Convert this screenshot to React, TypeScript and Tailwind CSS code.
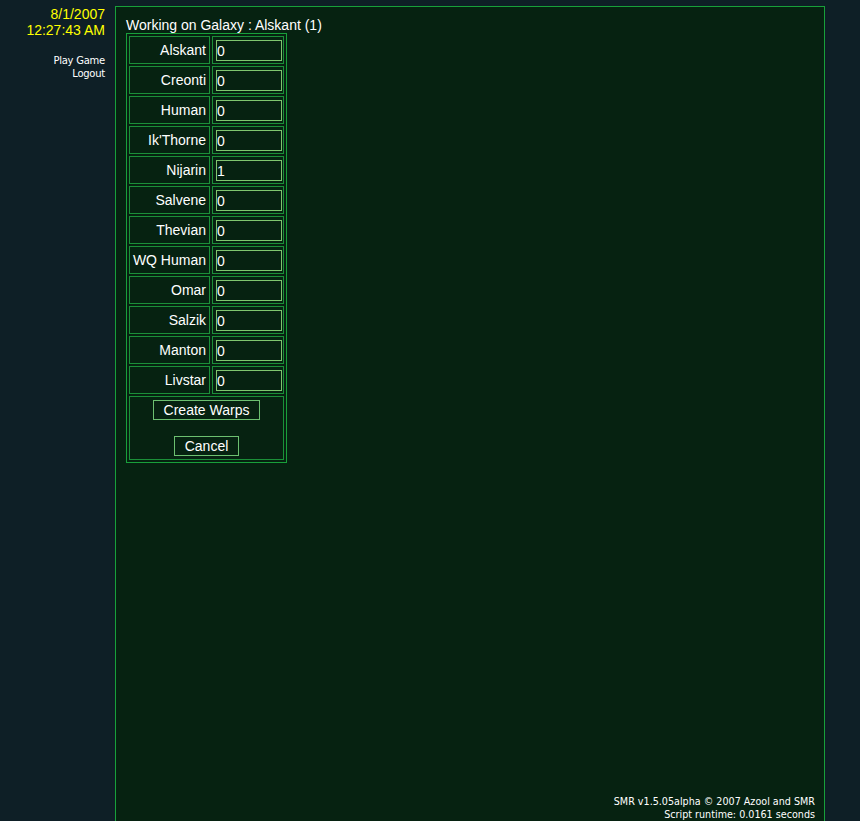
import React from "react";

const races: [string, string][] = [
  ["Alskant", "0"],
  ["Creonti", "0"],
  ["Human", "0"],
  ["Ik'Thorne", "0"],
  ["Nijarin", "1"],
  ["Salvene", "0"],
  ["Thevian", "0"],
  ["WQ Human", "0"],
  ["Omar", "0"],
  ["Salzik", "0"],
  ["Manton", "0"],
  ["Livstar", "0"],
];

export default function App() {
  return (
    <div className="flex min-h-[821px] w-[860px] overflow-hidden bg-[#0e1f26] text-white [font-family:'Liberation_Sans',Arial,sans-serif]">
      <div className="w-[115px] shrink-0 pr-[10px] pt-[6px] text-right">
        <div className="text-[14px] leading-[16px] text-[#ffff00]">
          <div>8/1/2007</div>
          <div>12:27:43 AM</div>
        </div>
        <div className="mt-[16px] text-[10px] leading-[13px] tracking-[-0.25px] text-white [font-family:'DejaVu_Sans',Verdana,sans-serif]">
          <div>Play Game</div>
          <div>Logout</div>
        </div>
      </div>
      <div className="mt-[6px] flex h-[830px] w-[710px] shrink-0 flex-col border border-[#18a03a] bg-[#062211] pl-[10px] pr-[9px] pt-[10px] pb-[14px]">
        <div className="text-[14px] leading-[16px]">Working on Galaxy : Alskant (1)</div>
        <div className="grid w-fit grid-cols-[81px_72px] gap-[2px] border border-[#18a03a] p-[2px] text-[14px]">
          {races.map(([name, val]) => (
            <React.Fragment key={name}>
              <div className="flex h-[28px] items-center justify-end border border-[#1b8f38] pr-[3px] leading-[16px]">
                {name}
              </div>
              <div className="h-[28px] border border-[#1b8f38] pl-[3px] pt-[3px]">
                <input
                  readOnly
                  value={val}
                  className="block h-[21px] w-[66px] border border-[#7fc66f] bg-transparent pl-0 text-[14px] leading-[16px] text-white outline-none"
                />
              </div>
            </React.Fragment>
          ))}
          <div className="col-span-2 flex h-[64px] flex-col items-center border border-[#1b8f38] pt-[3px]">
            <button className="h-[20px] border border-[#6cc070] bg-transparent px-[10px] text-[14px] leading-[16px] text-white">
              Create Warps
            </button>
            <button className="mt-[16px] h-[20px] border border-[#6cc070] bg-transparent px-[10px] text-[14px] leading-[16px] text-white">
              Cancel
            </button>
          </div>
        </div>
        <div className="mt-auto text-right text-[9.6px] leading-[13px] text-white [font-family:'DejaVu_Sans',Verdana,sans-serif]">
          <div>SMR v1.5.05alpha © 2007 Azool and SMR</div>
          <div>Script runtime: 0.0161 seconds</div>
        </div>
      </div>
    </div>
  );
}
